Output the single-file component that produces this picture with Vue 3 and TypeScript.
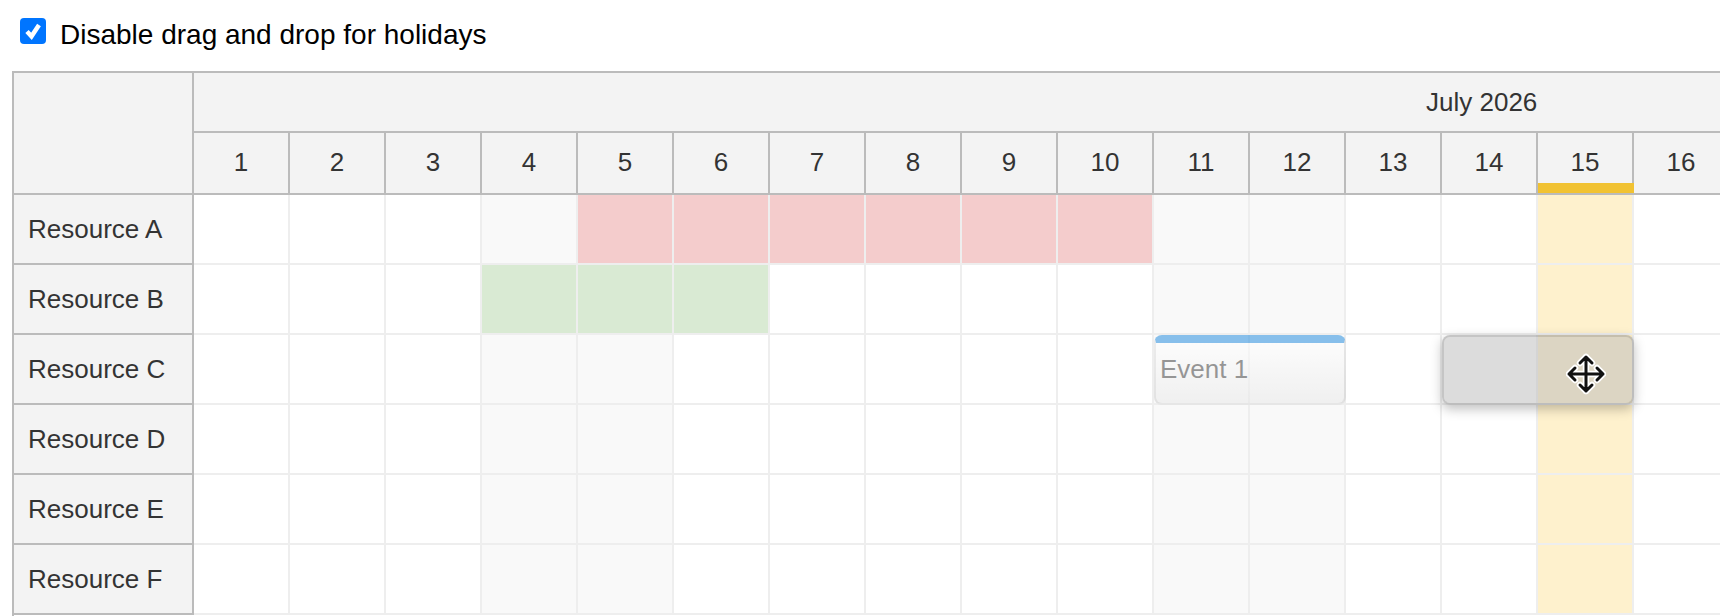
<script setup lang="ts">
const days: number[] = Array.from({ length: 16 }, (_, i) => i + 1)
const resources: string[] = ['A', 'B', 'C', 'D', 'E', 'F'].map((l) => `Resource ${l}`)
const cross =
  'M20 4v34M3 21h34M20 4l-6 6M20 4l6 6M20 38l-6-6M20 38l6-6M3 21l6-6M3 21l6 6M37 21l-6-6M37 21l-6 6'

function cellClass(row: number, day: number): string[] {
  const out: string[] = []
  if (row === 0 && day >= 5 && day <= 10) out.push('pink')
  else if (row === 1 && day >= 4 && day <= 6) out.push('green')
  else if (day === 15) out.push('today')
  else if (day === 4 || day === 5 || day === 11 || day === 12) out.push('weekend')
  return out
}
</script>

<template>
  <div class="page">
    <label class="toolbar">
      <span class="check-box">
        <input type="checkbox" class="check" checked />
        <svg class="check-mark" width="26" height="26" viewBox="0 0 26 26">
          <path d="M7 13.5l4.5 4.8L19 7" fill="none" stroke="#fff" stroke-width="4.5" />
        </svg>
      </span>
      <span class="toolbar-label">Disable drag and drop for holidays</span>
    </label>

    <div class="scheduler">
      <div class="corner"></div>
      <div class="month"><span class="month-label">July 2026</span></div>
      <div v-for="d in days" :key="d" class="day" :class="{ 'day-today': d === 15 }">{{ d }}</div>

      <template v-for="(name, r) in resources" :key="name">
        <div class="resource">{{ name }}</div>
        <div v-for="d in days" :key="d" class="cell" :class="cellClass(r, d)">
          <div v-if="r === 2 && d === 11" class="event">
            <span class="event-text">Event 1</span>
          </div>
          <div v-if="r === 2 && d === 14" class="ghost"></div>
        </div>
      </template>

      <svg class="cursor" width="40" height="42" viewBox="0 0 40 42">
        <path :d="cross" fill="none" stroke="#fff" stroke-width="6.5" stroke-linecap="round" stroke-linejoin="round" />
        <path :d="cross" fill="none" stroke="#111" stroke-width="3" stroke-linecap="round" stroke-linejoin="round" />
      </svg>
    </div>
  </div>
</template>

<style scoped>
.page {
  font-family: "Liberation Sans", Arial, sans-serif;
  width: 1720px;
  height: 616px;
  overflow: hidden;
}
.toolbar {
  display: flex;
  align-items: flex-start;
  gap: 14px;
  height: 26px;
  padding: 18px 0 27px 20px;
  font-size: 28px;
  color: #000;
}
.toolbar-label {
  line-height: 34px;
  white-space: nowrap;
}
.check-box {
  position: relative;
  width: 26px;
  height: 26px;
  flex: none;
}
.check {
  display: block;
  appearance: none;
  width: 26px;
  height: 26px;
  margin: 0;
  border-radius: 4px;
  background: #0075ff;
}
.check-mark {
  position: absolute;
  left: 0;
  top: 0;
  pointer-events: none;
}
.scheduler {
  position: relative;
  display: grid;
  grid-template-columns: 180px repeat(16, 96px);
  grid-template-rows: 60px 62px repeat(6, 70px);
  width: max-content;
  margin-left: 12px;
  padding-bottom: 10px;
  border-top: 2px solid #bbb;
  border-left: 2px solid #bbb;
  color: #333;
  font-size: 26px;
}
.corner {
  grid-row: 1 / span 2;
  background: #f3f3f3;
  border-right: 2px solid #bbb;
  border-bottom: 2px solid #bbb;
}
.month {
  grid-column: 2 / -1;
  display: flex;
  align-items: center;
  padding-left: 1232px;
  background: #f3f3f3;
  border-bottom: 2px solid #bbb;
}
.month-label {
  white-space: nowrap;
}
.day {
  position: relative;
  display: flex;
  align-items: center;
  justify-content: center;
  padding-bottom: 2px;
  background: #f3f3f3;
  border-right: 2px solid #bbb;
  border-bottom: 2px solid #bbb;
}
.day-today::after {
  content: "";
  position: absolute;
  left: 0;
  right: -2px;
  bottom: 0;
  height: 10px;
  background: #f1c232;
}
.resource {
  display: flex;
  align-items: center;
  padding-left: 14px;
  background: #f3f3f3;
  border-right: 2px solid #bbb;
  border-bottom: 2px solid #bbb;
}
.cell {
  position: relative;
  background-clip: padding-box;
  border-right: 2px solid #eee;
  border-bottom: 2px solid #eee;
}
.pink {
  background-color: #f4cccc;
}
.green {
  background-color: #d9ead3;
}
.weekend {
  background-color: #f9f9f9;
}
.today {
  background-color: #fef1cd;
}
.event {
  position: absolute;
  z-index: 2;
  left: 0;
  top: 0;
  width: 192px;
  height: 70px;
  box-sizing: border-box;
  display: flex;
  align-items: center;
  padding-left: 4px;
  padding-bottom: 8px;
  border: 2px solid rgba(0, 0, 0, 0.12);
  border-top: 8px solid #1787df;
  border-radius: 8px;
  background: linear-gradient(#fff, #e8e8e8);
  opacity: 0.5;
  color: #333;
}
.ghost {
  position: absolute;
  z-index: 3;
  left: 0;
  top: 0;
  width: 192px;
  height: 70px;
  box-sizing: border-box;
  border: 2px solid rgba(140, 140, 140, 0.5);
  border-radius: 8px;
  background: rgba(185, 185, 185, 0.5);
  background-clip: padding-box;
  box-shadow: 0 4px 12px rgba(0, 0, 0, 0.25);
}
.cursor {
  position: absolute;
  z-index: 4;
  left: 1552px;
  top: 280px;
}
</style>

<style>
html,
body {
  margin: 0;
  overflow: hidden;
  background: #fff;
}
</style>
